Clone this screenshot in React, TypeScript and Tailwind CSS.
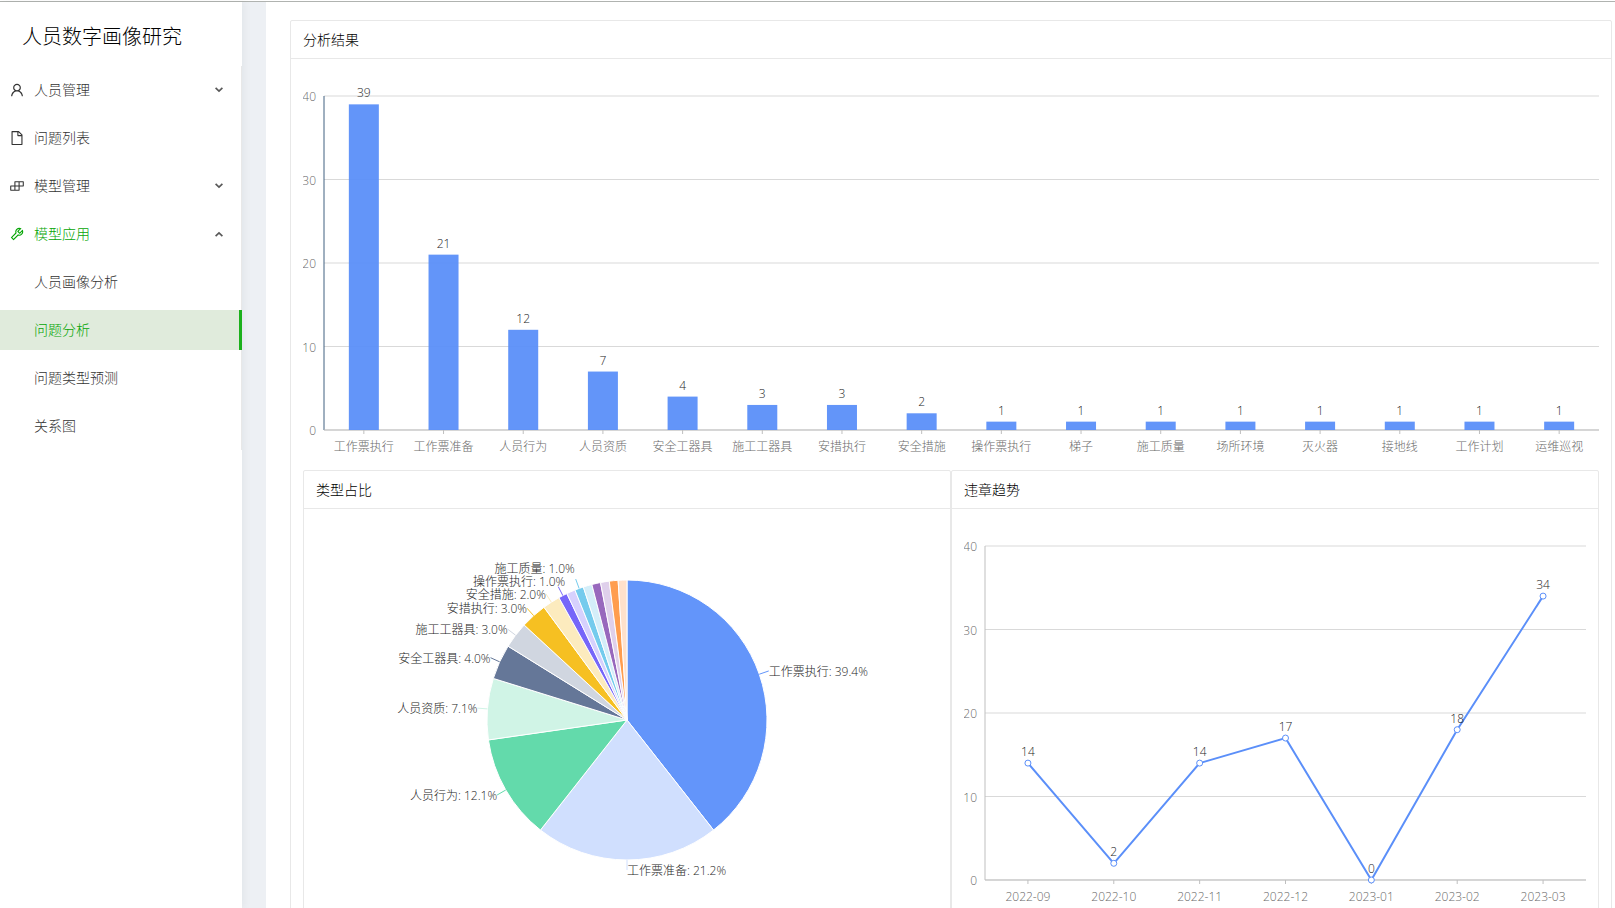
import { useLayoutEffect, useRef, useState } from "react";
import type { ReactNode } from "react";
import {
  AiOutlineBuild,
  AiOutlineFile,
  AiOutlineTool,
  AiOutlineUser,
} from "react-icons/ai";

const problemTypes = [
  { name: "工作票执行", count: 39, color: "#6395fa" },
  { name: "工作票准备", count: 21, color: "#d0dffe" },
  { name: "人员行为", count: 12, color: "#63daab" },
  { name: "人员资质", count: 7, color: "#d0f4e6" },
  { name: "安全工器具", count: 4, color: "#657798" },
  { name: "施工工器具", count: 3, color: "#d0d6e0" },
  { name: "安措执行", count: 3, color: "#f6c022" },
  { name: "安全措施", count: 2, color: "#fcebbe" },
  { name: "操作票执行", count: 1, color: "#7666f9", shift: [7, -6] },
  { name: "梯子", count: 1, color: "#d6d1fd", hideLabel: true },
  { name: "施工质量", count: 1, color: "#74cbed", shift: [-1, -11] },
  { name: "场所环境", count: 1, color: "#d4eef9", hideLabel: true },
  { name: "灭火器", count: 1, color: "#9868bd", hideLabel: true },
  { name: "接地线", count: 1, color: "#dfd0eb", hideLabel: true },
  { name: "工作计划", count: 1, color: "#ff9d4e", hideLabel: true },
  { name: "运维巡视", count: 1, color: "#ffe1cb", hideLabel: true },
];

const trend = [
  { month: "2022-09", count: 14 },
  { month: "2022-10", count: 2 },
  { month: "2022-11", count: 14 },
  { month: "2022-12", count: 17 },
  { month: "2023-01", count: 0 },
  { month: "2023-02", count: 18 },
  { month: "2023-03", count: 34 },
];

const CHART_HEIGHT = 399;
const PLOT_LEFT = 21;
const PLOT_TOP = 25;
const PLOT_BOTTOM = 359;
const MAX = 40;

const yOf = (value: number) =>
  PLOT_BOTTOM - (value / MAX) * (PLOT_BOTTOM - PLOT_TOP);

// charts redraw to the width of their card
const useWidth = () => {
  const ref = useRef<HTMLDivElement>(null);
  const [width, setWidth] = useState(0);
  useLayoutEffect(() => {
    const el = ref.current;
    if (!el) return;
    setWidth(el.clientWidth);
    const observer = new ResizeObserver(() => setWidth(el.clientWidth));
    observer.observe(el);
    return () => observer.disconnect();
  }, []);
  return { ref, width };
};

const Axes = ({
  width,
  labels,
  yAxisColor,
}: {
  width: number;
  labels: string[];
  yAxisColor: string;
}) => {
  const step = (width - PLOT_LEFT) / labels.length;
  return (
    <g>
      {[0, 10, 20, 30, 40].map((tick) => (
        <g key={tick}>
          <line
            x1={PLOT_LEFT}
            x2={width}
            y1={yOf(tick)}
            y2={yOf(tick)}
            stroke="#d9d9d9"
          />
          <text
            x={PLOT_LEFT - 8}
            y={yOf(tick) + 5}
            textAnchor="end"
            className="fill-[#6b6b6b]"
          >
            {tick}
          </text>
        </g>
      ))}
      <line
        x1={PLOT_LEFT}
        x2={PLOT_LEFT}
        y1={PLOT_TOP}
        y2={PLOT_BOTTOM}
        stroke={yAxisColor}
      />
      <line
        x1={PLOT_LEFT}
        x2={width}
        y1={PLOT_BOTTOM}
        y2={PLOT_BOTTOM}
        stroke="#bfbfbf"
      />
      {labels.map((label, i) => {
        const x = PLOT_LEFT + step * (i + 0.5);
        return (
          <g key={label}>
            <line
              x1={x}
              x2={x}
              y1={PLOT_BOTTOM}
              y2={PLOT_BOTTOM + 4}
              stroke="#bfbfbf"
            />
            <text
              x={x}
              y={PLOT_BOTTOM + 21}
              textAnchor="middle"
              className="fill-[#6b6b6b]"
            >
              {label}
            </text>
          </g>
        );
      })}
    </g>
  );
};

const BarChart = () => {
  const { ref, width } = useWidth();
  const step = (width - PLOT_LEFT) / problemTypes.length;
  const barWidth = 30;
  return (
    <div ref={ref}>
      <svg width="100%" height={CHART_HEIGHT} className="block text-xs">
        {width > 0 && (
          <>
            <Axes
              width={width}
              labels={problemTypes.map((item) => item.name)}
              yAxisColor="#416180"
            />
            {problemTypes.map((item, i) => {
              const x = PLOT_LEFT + step * (i + 0.5);
              return (
                <g key={item.name}>
                  <rect
                    x={x - barWidth / 2}
                    y={yOf(item.count)}
                    width={barWidth}
                    height={PLOT_BOTTOM - yOf(item.count)}
                    fill="#5b8ff9"
                    fillOpacity={0.95}
                  />
                  <text
                    x={x}
                    y={yOf(item.count) - 7}
                    textAnchor="middle"
                    className="fill-[#262626]"
                  >
                    {item.count}
                  </text>
                </g>
              );
            })}
          </>
        )}
      </svg>
    </div>
  );
};

const LineChart = () => {
  const { ref, width } = useWidth();
  const step = (width - PLOT_LEFT) / trend.length;
  const points = trend.map((item, i) => ({
    ...item,
    x: PLOT_LEFT + step * (i + 0.5),
    y: yOf(item.count),
  }));
  return (
    <div ref={ref}>
      <svg width="100%" height={CHART_HEIGHT} className="block text-xs">
        {width > 0 && (
          <>
            <Axes
              width={width}
              labels={trend.map((item) => item.month)}
              yAxisColor="#bfbfbf"
            />
            <polyline
              points={points.map((p) => `${p.x},${p.y}`).join(" ")}
              fill="none"
              stroke="#5b8ff9"
              strokeWidth={2}
              strokeLinejoin="round"
            />
            {points.map((p) => (
              <g key={p.month}>
                <circle cx={p.x} cy={p.y} r={3} fill="#fff" stroke="#5b8ff9" />
                <text
                  x={p.x}
                  y={p.y - 7}
                  textAnchor="middle"
                  className="fill-[#262626]"
                >
                  {p.count}
                </text>
              </g>
            ))}
          </>
        )}
      </svg>
    </div>
  );
};

const PieChart = () => {
  const { ref, width } = useWidth();
  const total = problemTypes.reduce((sum, item) => sum + item.count, 0);
  const cx = width / 2;
  const cy = 199;
  const radius = 140;
  const at = (share: number, r: number) => {
    const angle = share * Math.PI * 2;
    return [cx + r * Math.sin(angle), cy - r * Math.cos(angle)];
  };
  let passed = 0;
  const slices = problemTypes.map((item) => {
    const start = passed / total;
    passed += item.count;
    const end = passed / total;
    return { ...item, start, end, mid: (start + end) / 2 };
  });
  return (
    <div ref={ref}>
      <svg width="100%" height={CHART_HEIGHT} className="block text-xs">
        {width > 0 &&
          slices.map((slice) => {
            const [x1, y1] = at(slice.start, radius);
            const [x2, y2] = at(slice.end, radius);
            return (
              <path
                key={slice.name}
                d={`M${cx} ${cy}L${x1} ${y1}A${radius} ${radius} 0 0 1 ${x2} ${y2}Z`}
                fill={slice.color}
                stroke="#fff"
              />
            );
          })}
        {width > 0 &&
          slices
            .filter((slice) => !slice.hideLabel)
            .map((slice) => {
              const [x1, y1] = at(slice.mid, radius);
              const [x2, y2] = at(slice.mid, radius + 10);
              const [dx, dy] = slice.shift ?? [0, 0];
              return (
                <g key={slice.name}>
                  <line x1={x1} y1={y1} x2={x2} y2={y2} stroke={slice.color} />
                  <text
                    x={x2 + dx}
                    y={y2 + dy + 5}
                    textAnchor={slice.mid > 0.501 ? "end" : "start"}
                    className="fill-[#262626]"
                  >
                    {slice.name}: {((slice.count / total) * 100).toFixed(1)}%
                  </text>
                </g>
              );
            })}
      </svg>
    </div>
  );
};

const Card = ({ title, children }: { title: string; children: ReactNode }) => {
  return (
    <section className="min-w-0 rounded-xs border border-[#e8e8e8] bg-white">
      <h2 className="border-b border-[#e8e8e8] px-3 py-2 text-sm leading-[21px] text-black">
        {title}
      </h2>
      <div className="p-3">{children}</div>
    </section>
  );
};

const Arrow = ({ open }: { open: boolean }) => {
  return (
    <svg
      viewBox="0 0 8 6"
      className={`ml-auto h-[6px] w-2 ${open ? "rotate-180" : ""}`}
      fill="none"
      stroke="#595959"
      strokeWidth={1.7}
    >
      <path d="M0.6 0.9 4 4.1 7.4 0.9" />
    </svg>
  );
};

const menu = [
  { name: "人员管理", icon: AiOutlineUser, group: true },
  { name: "问题列表", icon: AiOutlineFile },
  { name: "模型管理", icon: AiOutlineBuild, group: true },
  {
    name: "模型应用",
    icon: AiOutlineTool,
    group: true,
    children: ["人员画像分析", "问题分析", "问题类型预测", "关系图"],
  },
];

const Sidebar = () => {
  const current = "问题分析";
  return (
    <aside className="relative z-10 w-[242px] shrink-0 bg-white shadow-[2px_0_8px_rgba(29,35,41,0.05)]">
      <h1 className="flex h-16 items-center pt-1.5 pl-[22px] text-xl text-black">
        人员数字画像研究
      </h1>
      <nav className="border-r border-[#e8e8e8] text-sm">
        {menu.map(({ name, icon: Icon, group, children }) => {
          const row = `flex h-10 w-full items-center gap-[9px] pr-[18px] pl-[9px] ${
            children ? "text-[#05a505]" : "text-[#333333]"
          }`;
          return (
            <div key={name}>
              <div className="py-1">
                {group ? (
                  <button
                    type="button"
                    aria-expanded={!!children}
                    className={row}
                  >
                    <Icon className="size-4" />
                    {name}
                    <Arrow open={!!children} />
                  </button>
                ) : (
                  <a href="#" className={row}>
                    <Icon className="size-4" />
                    {name}
                  </a>
                )}
              </div>
              {children?.map((child) => (
                <div key={child} className="py-1">
                  <a
                    href="#"
                    className={`flex h-10 items-center pl-[34px] ${
                      child === current
                        ? "-mr-px border-r-3 border-[#1bb01b] bg-[#e0ebdc] text-[#05a505]"
                        : "text-[#333333]"
                    }`}
                  >
                    {child}
                  </a>
                </div>
              ))}
            </div>
          );
        })}
      </nav>
    </aside>
  );
};

const App = () => {
  return (
    <div className="flex h-screen flex-col bg-white pt-px font-['Open_Sans','Noto_Sans_CJK_SC',sans-serif] font-light">
      <div className="h-px shrink-0 bg-[#b0b3b0]" />
      <div className="flex min-h-0 flex-1 bg-[#edf0f4]">
        <Sidebar />
        <main className="ml-6 min-w-0 flex-1 overflow-y-auto bg-white pt-[18px] pr-[3px] pl-6 [scrollbar-width:none]">
          <Card title="分析结果">
            <BarChart />
            <div className="grid grid-cols-2">
              <Card title="类型占比">
                <PieChart />
              </Card>
              <Card title="违章趋势">
                <LineChart />
              </Card>
            </div>
          </Card>
        </main>
      </div>
    </div>
  );
};

export default App;
